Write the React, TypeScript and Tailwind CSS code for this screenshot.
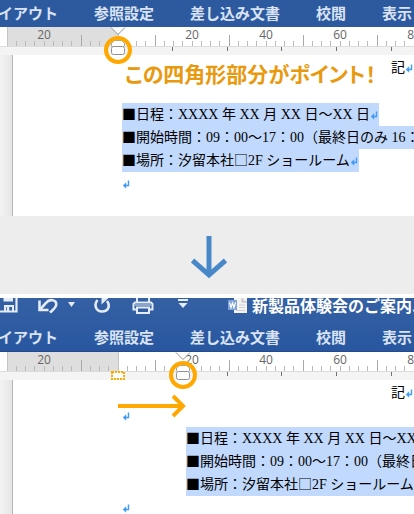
import { ReactNode } from "react";

const MENU_ITEMS = ["イアウト", "参照設定", "差し込み文書", "校閲", "表示"];
const RULER_LABELS = ["20", "", "20", "40", "60", "80"];

const ZERO = 118; // x of the ruler's zero point
const STEP = 9.25; // distance between two small ticks

// Blue paragraph mark
const ReturnMark = () => (
  <svg viewBox="0 0 8 10" className="inline-block h-[10px] w-2 shrink-0" fill="none" stroke="#3f9bf5">
    <path d="M6.5 0.5V5.5H2" strokeWidth="1.4" />
    <path d="M4 2.7L1 5.5L4 8.3Z" fill="#3f9bf5" strokeWidth="0.4" />
  </svg>
);

const MenuBar = () => (
  <nav className="-ml-0.5 flex h-[27px] gap-9 whitespace-nowrap text-[15px] leading-[26px] font-bold text-[#d9e3f3]">
    {MENU_ITEMS.map((item) => (
      <a key={item} href="#" className="shrink-0">
        {item}
      </a>
    ))}
  </nav>
);

const RulerTicks = () => {
  const ticks = [];
  for (let i = -11; i <= 32; i++) {
    if (i === 0) continue;
    const major = Math.abs(i) % 8 === 4;
    const x = Math.floor(ZERO + i * STEP) + 0.5;
    ticks.push(<path key={i} d={`M${x} ${major ? 8 : 14}V19`} stroke={major ? "#a9a9a9" : "#b9b9b9"} />);
  }
  const tabs = [];
  for (let i = 1; i <= 5; i++) {
    const x = Math.floor(ZERO + i * 54.6) + 0.5;
    tabs.push(<path key={i} d={`M${x} 20V24`} stroke="#707070" />);
  }
  return (
    <svg className="absolute inset-0 h-7 w-full" fill="none">
      {ticks}
      {tabs}
    </svg>
  );
};

const IndentMarker = () => (
  <svg viewBox="0 0 28 37" className="h-[37px] w-7" fill="none">
    <path d="M7 0.5L14 7.5L21 0.5" fill="#fff" stroke="#8f8f8f" />
    <path d="M7.5 19V16L10.5 13.5H17.5L20.5 16V19" fill="#fff" stroke="#a5a5a5" />
    <rect x="7.5" y="19.5" width="13" height="8" rx="2" fill="#fff" stroke="#909090" />
    <circle cx="14" cy="23" r="12" stroke="#ffa800" strokeWidth="4" />
  </svg>
);

const Ruler = ({ children }: { children: ReactNode }) => (
  <div className="relative h-7 shrink-0 bg-[#f4f4f4]">
    <div className="flex h-5 border-b border-[#dcdcdc] bg-white pl-[7px]">
      <div className="w-[112px] border-x border-[#c4c4c4] bg-[#dedede]" />
    </div>
    <RulerTicks />
    <div className="absolute inset-0 flex overflow-hidden pl-[7px] text-xs leading-4 text-[#666] font-['Open_Sans',sans-serif]">
      {RULER_LABELS.map((label, i) => (
        <span key={i} className="w-[74px] shrink-0 text-center">
          {label}
        </span>
      ))}
    </div>
    {children}
  </div>
);

// Full-width symbol
const Wide = ({ children }: { children: ReactNode }) => (
  <span className="leading-none font-['Noto_Sans_CJK_JP',sans-serif]">{children}</span>
);

const Line = ({ children }: { children: ReactNode }) => (
  <p className="w-max bg-[#c1d9fd] pr-px">
    <Wide>■</Wide>
    {children}
    <ReturnMark />
  </p>
);

const EventDetails = () => (
  <>
    <Line>日程：XXXX 年 XX 月 XX 日～XX 日</Line>
    <Line>開始時間：09：00～17：00（最終日のみ 16：00 まで）</Line>
    <Line>
      場所：汐留本社<Wide>□</Wide>2F ショールーム
    </Line>
  </>
);

const Page = ({ children }: { children: ReactNode }) => (
  <div className="flex grow">
    <div className="w-[13px] shrink-0 border-r border-[#b5b5b5] bg-linear-to-r from-[#f3f3f3] to-[#e6e6e6]" />
    <div className="min-w-0 grow overflow-hidden bg-white pt-px text-sm leading-[23px] whitespace-nowrap text-black font-['Liberation_Serif','Noto_Sans_CJK_JP',serif]">
      <p className="pr-px text-right">
        記<ReturnMark />
      </p>
      {children}
    </div>
  </div>
);

const Toolbar = () => (
  <div className="flex h-6 items-start text-white">
    <svg viewBox="0 0 18 17" className="mr-5 h-[17px] w-[18px] shrink-0" fill="none" stroke="#e4ecf8" strokeWidth="2">
      <path d="M0 13.5H16.5V0" strokeWidth="2.2" />
      <path d="M3.5 0H13V3.5H3.5Z" fill="#e4ecf8" stroke="none" />
      <path d="M5 13V8H13V13" />
      <path d="M8 9V13" strokeWidth="2.5" />
    </svg>
    <svg viewBox="0 0 20 17" className="mr-2.5 h-[17px] w-5 shrink-0" fill="none" stroke="#e4ecf8" strokeWidth="2.6">
      <path d="M1.5 2.5V12H10.5" />
      <path d="M2 11.5L8 5C11.5 0.5 18.5 1.5 18.3 6.5C18 10 15 11.5 12 14.5" />
    </svg>
    <svg viewBox="0 0 8 17" className="mr-4.5 h-[17px] w-2 shrink-0" fill="#e4ecf8">
      <path d="M0 4H7L3.5 9Z" />
    </svg>
    <svg viewBox="0 0 18 17" className="mr-5 h-[17px] w-[18px] shrink-0" fill="none" stroke="#e4ecf8" strokeWidth="2.6">
      <path d="M3.5 2C-0.5 7 2 13.5 8 13.5C14.5 13.5 16.5 7.5 13 3" />
      <path d="M7.5 0V6.5L14.5 0Z" fill="#e4ecf8" stroke="none" />
    </svg>
    <svg viewBox="0 0 22 17" className="mr-6 h-[17px] w-[22px] shrink-0" fill="none" stroke="#e4ecf8" strokeWidth="2">
      <path d="M5 4V0M17 0V4" />
      <path d="M5 11.5H1.5V6L3 4.5H19L20.5 6V11.5H17" />
      <path d="M5 9.5H17V15H5Z" />
      <path d="M3 7H19" strokeWidth="1" />
    </svg>
    <svg viewBox="0 0 10 17" className="mr-10 h-[17px] w-2.5 shrink-0" fill="#e4ecf8">
      <path d="M0 1H10V3H0ZM0.5 5H9.5L5 10Z" />
    </svg>
    <svg viewBox="0 0 20 17" className="mr-1 h-[17px] w-5 shrink-0">
      <path d="M6 0H19V15H6Z" fill="#f3f3f3" />
      <path d="M14 0V4H19" fill="#dcdcdc" stroke="#bbb" />
      <path d="M11 7H17M11 9.5H17M8 12.5H17" stroke="#d0d0d0" />
      <rect x="0" y="2" width="9" height="10" fill="#7ea3d8" />
      <path d="M1.5 4.5L3 9.5L4.5 5L6 9.5L7.5 4.5" fill="none" stroke="#fff" strokeWidth="1.2" />
    </svg>
    <span className="shrink-0 text-base leading-[14px] font-bold whitespace-nowrap">新製品体験会のご案内.docx</span>
  </div>
);

const App = () => {
  return (
    <div className="flex h-screen flex-col overflow-hidden bg-white font-['Noto_Sans_CJK_JP',sans-serif]">
      {/* Before */}
      <section className="flex h-[216px] shrink-0 flex-col">
        <div className="shrink-0 overflow-hidden bg-[#2d5a9f]">
          <MenuBar />
        </div>
        <Ruler>
          <div className="absolute top-0 left-[104px] z-10">
            <IndentMarker />
          </div>
          <strong className="absolute top-8 left-[125px] text-[21px] leading-7 font-bold whitespace-nowrap text-[#e8990d] [font-feature-settings:'palt']">
            この四角形部分がポイント！
          </strong>
        </Ruler>
        <Page>
          <div className="mt-6 pl-[109px]">
            <EventDetails />
            <p>
              <ReturnMark />
            </p>
          </div>
        </Page>
      </section>

      {/* Arrow between the two states */}
      <div className="flex h-[78px] shrink-0 items-center justify-center bg-[#ededed]">
        <svg viewBox="0 0 36 44" className="mt-1 ml-1 h-11 w-9" fill="none" stroke="#4888c8" strokeWidth="5">
          <path d="M18 1V40" />
          <path d="M1.5 25.5L18 40L34.5 25.5" />
        </svg>
      </div>

      {/* After */}
      <section className="mt-1 flex min-h-0 grow flex-col">
        <div className="shrink-0 overflow-hidden border-b border-[#234b8c] bg-linear-to-b from-[#3560a4] to-[#2857a0]">
          <Toolbar />
          <div className="pt-0.5">
            <MenuBar />
          </div>
        </div>
        <Ruler>
          <svg viewBox="0 0 14 9" className="absolute top-[19px] left-[111px] h-[9px] w-3.5">
            <rect x="1" y="1" width="12" height="7" fill="#fff" stroke="#ffa800" strokeWidth="2" strokeDasharray="2 1" />
          </svg>
          <div className="absolute top-0 left-[169px] z-10">
            <IndentMarker />
          </div>
          <svg viewBox="0 0 68 24" className="absolute top-[42px] left-[118px] h-6 w-[68px]" fill="none" stroke="#ffa800" strokeWidth="4">
            <path d="M0 12H64" />
            <path d="M55 2L65 12L55 22" />
          </svg>
        </Ruler>
        <Page>
          <div className="pl-[109px]">
            <p>
              <ReturnMark />
            </p>
            <div className="pl-16">
              <EventDetails />
            </div>
            <p>
              <ReturnMark />
            </p>
          </div>
        </Page>
      </section>
    </div>
  );
};

export default App;
